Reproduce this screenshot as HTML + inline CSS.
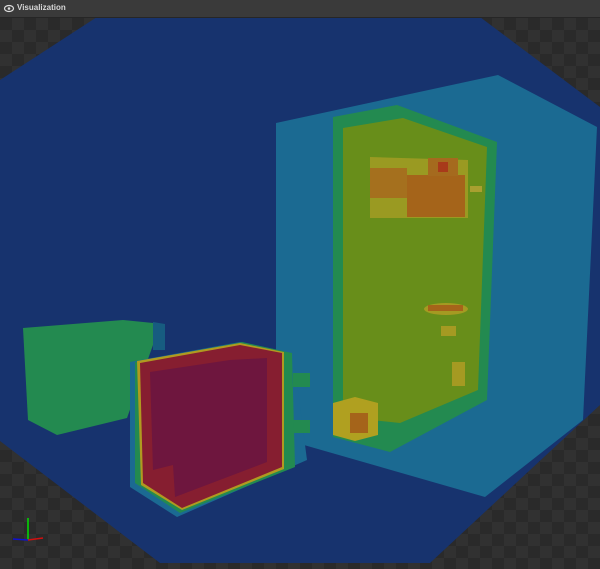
<!DOCTYPE html>
<html><head><style>
html,body{margin:0;padding:0;width:600px;height:569px;overflow:hidden;background:#2b2b2b}
.hdr{position:absolute;left:0;top:0;width:600px;height:17px;background:#3a3a3a;border-bottom:1px solid #262626;}
.hdr span{position:absolute;left:17px;top:3px;font:bold 8px "Liberation Sans",sans-serif;color:#d8d8d8}
.view{position:absolute;left:0;top:18px;width:600px;height:551px;
background-color:#2a2a2a;
background-image:linear-gradient(45deg,#313131 25%,transparent 25%,transparent 75%,#313131 75%),linear-gradient(45deg,#313131 25%,transparent 25%,transparent 75%,#313131 75%);
background-size:24px 24px;background-position:0 0,12px 12px}
svg{position:absolute;left:0;top:0}
</style></head><body>
<div class="view"></div>
<svg width="600" height="569">
<polygon fill="#17336e" points="97,17 480,17 600,107 600,405 430,563 160,563 0,441 0,80"/>
<polygon fill="#1b6a92" points="276,123 498,75 597,127 583,420 485,497 276,437"/>
<polygon fill="#238a50" points="333,117 397,105 497,142 487,400 390,452 333,437"/>
<polygon fill="#688e1a" points="343,128 403,118 487,147 478,390 400,423 343,417"/>
<polygon fill="#9a9a22" points="370,157 468,160 468,218 370,218"/>
<rect x="370" y="168" width="37" height="30" fill="#a5701e"/>
<rect x="407" y="175" width="58" height="42" fill="#a5641a"/>
<rect x="428" y="158" width="30" height="18" fill="#a56a1e"/>
<rect x="438" y="162" width="10" height="10" fill="#a83a1a"/>
<rect x="470" y="186" width="12" height="6" fill="#a8a030"/>
<ellipse cx="446" cy="309" rx="22" ry="6" fill="#a59a22"/>
<rect x="428" y="305" width="35" height="6" fill="#a5641a"/>
<rect x="441" y="326" width="15" height="10" fill="#a59a22"/>
<rect x="452" y="362" width="13" height="24" fill="#a59a22"/>
<polygon fill="#b0a020" points="333,403 355,397 378,403 378,435 355,441 333,435"/>
<rect x="350" y="413" width="18" height="20" fill="#a5641a"/>
<polygon fill="#175c80" points="153,322 165,324 165,350 153,350"/>
<polygon fill="#238a50" points="23,328 123,320 153,323 153,345 127,418 57,435 28,420"/>
<polygon fill="#1b6a92" points="130,362 240,342 293,353 307,460 177,517 130,487"/>
<rect x="293" y="373" width="17" height="14" fill="#238a50"/>
<rect x="293" y="420" width="17" height="13" fill="#238a50"/>
<polygon fill="#238a50" points="135,362 242,342 292,353 295,467 180,513 135,483"/>
<polygon fill="#b09a20" points="137,361 240,343 284,352 284,469 182,510 141,485"/>
<polygon fill="#861e30" points="140,363 240,345 282,353 282,467 182,508 143,483"/>
<polygon fill="#6e163e" points="150,372 230,360 267,358 267,462 175,497 173,465 153,470"/>
<line x1="28" y1="518" x2="28" y2="540" stroke="#00e000" stroke-width="1.5"/>
<line x1="28" y1="540" x2="43" y2="538" stroke="#d01010" stroke-width="1.5"/>
<line x1="28" y1="540" x2="13" y2="539" stroke="#1010d0" stroke-width="1.5"/>
</svg>
<div class="hdr"><svg width="14" height="17" style="left:3px;top:0"><ellipse cx="6" cy="8.5" rx="4.5" ry="3" fill="none" stroke="#ddd" stroke-width="1.2"/><circle cx="6" cy="8.5" r="1.3" fill="#ddd"/></svg><span>Visualization</span></div>
</body></html>
